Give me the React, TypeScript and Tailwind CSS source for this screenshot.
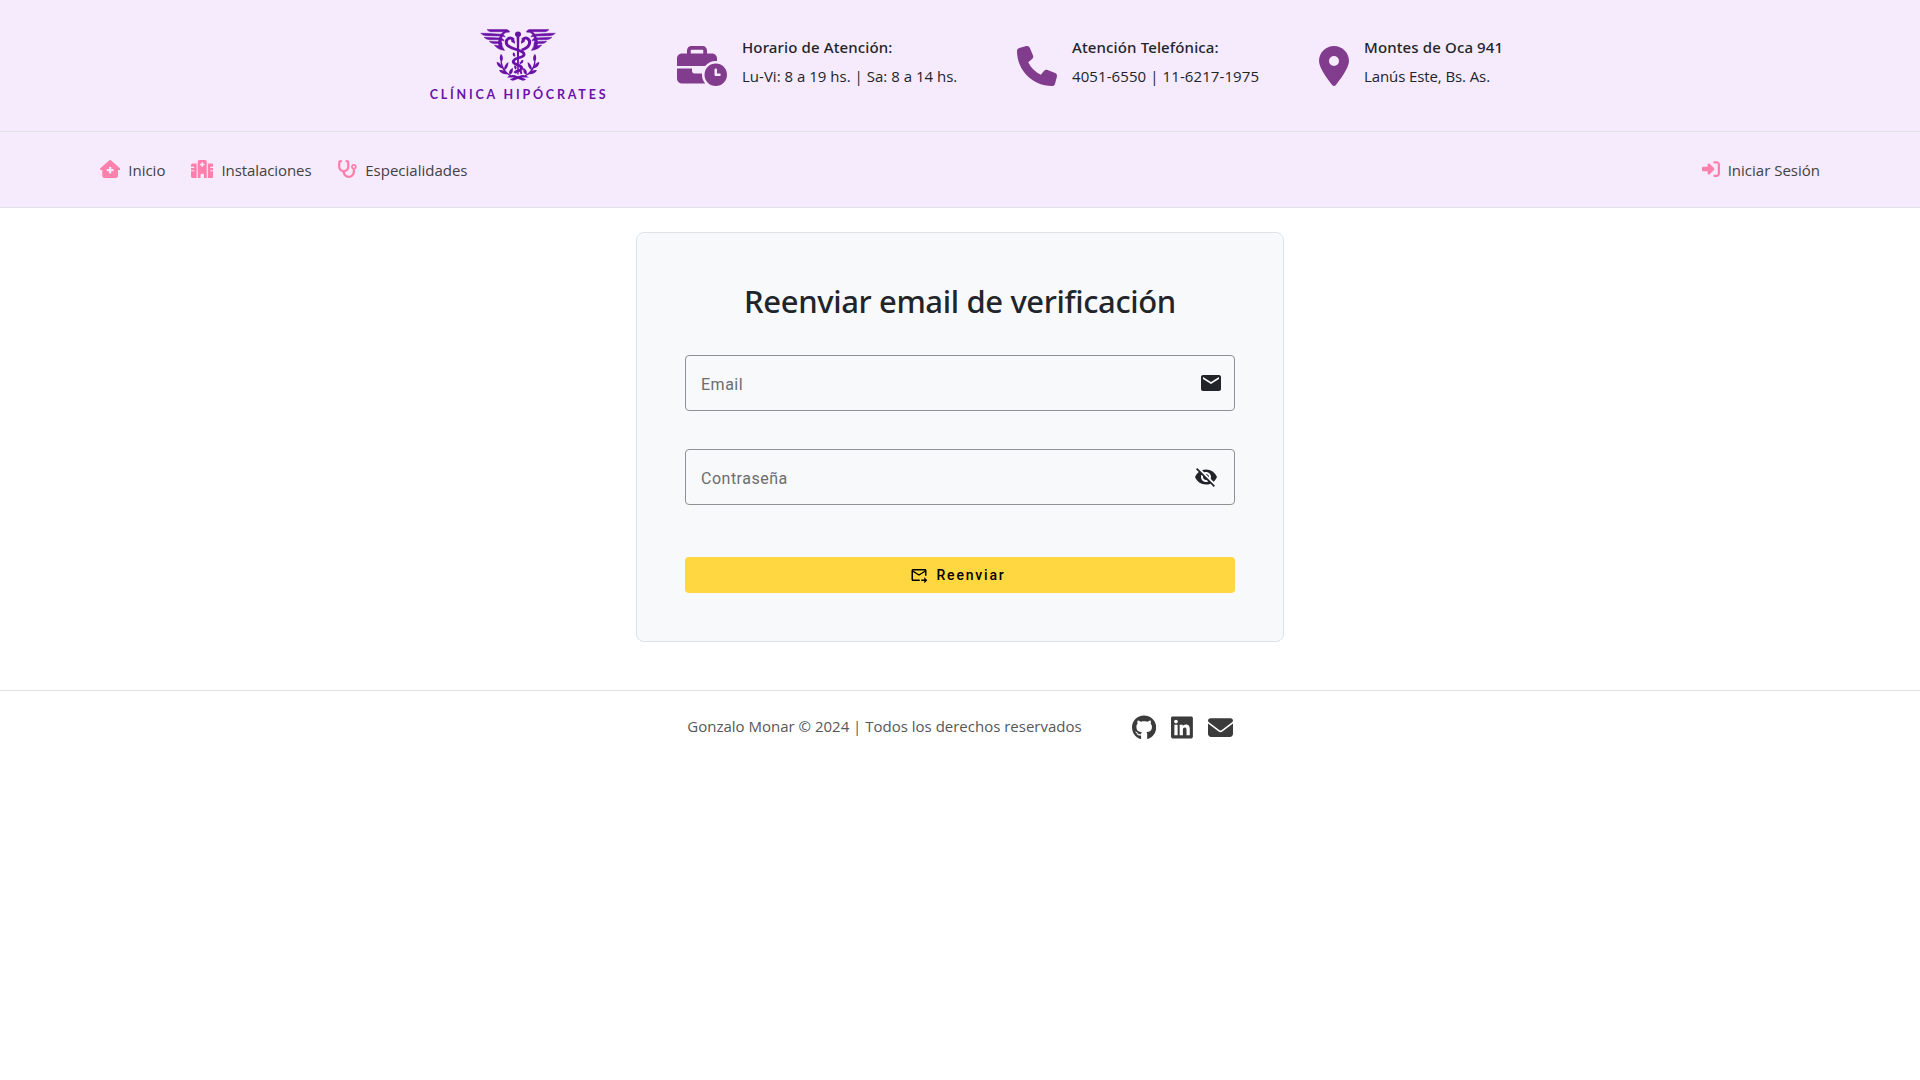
import type { ReactNode } from "react";
import {
  FaBusinessTime,
  FaPhone,
  FaLocationDot,
  FaHouseMedical,
  FaHospital,
  FaStethoscope,
  FaRightToBracket,
  FaGithub,
  FaLinkedin,
  FaEnvelope,
} from "react-icons/fa6";
import { MdEmail, MdVisibilityOff, MdOutlineForwardToInbox } from "react-icons/md";

function Wing() {
  return (
    <g stroke="currentColor" strokeWidth="1.5">
      <path d="M24 5 L84 5 Q90 7 92 13 Q86 15 78 12 L34 12 Q27 10 24 5 Z" />
      <path d="M5 17 L20 17 L68 20 Q76 22 79 29 L66 26 L22 25 Q11 24 5 17 Z" />
      <path d="M15 30 L66 32 Q74 34 75 42 L62 38 L32 38 Q21 37 15 30 Z" />
      <path d="M31 43 L62 44 Q70 46 69 54 L56 50 L43 50 Q35 49 31 43 Z" />
      <path d="M46 55 L60 57 Q68 60 76 72 Q56 70 46 55 Z" />
      <path d="M90 10 Q70 17 67 36 Q66 56 76 72 Q58 66 58 46 Q60 20 78 9 Z" />
    </g>
  );
}

function Laurel() {
  return (
    <g>
      <path d="M66 83 Q77 97 67 111 Q58 98 66 83 Z" />
      <path d="M53 109 Q68 114 70 131 Q53 126 53 109 Z" />
      <path d="M88 110 Q89 127 76 137 Q73 120 88 110 Z" />
      <path d="M60 136 Q77 134 86 149 Q68 151 60 136 Z" />
      <path d="M101 128 Q104 145 92 151 Q86 138 101 128 Z" />
      <path d="M68 108 Q72 138 98 154 L94 156 Q66 140 64 108 Z" />
      <path d="M84 160 Q98 146 114 155 L142 165 L132 170 L112 162 L96 169 Q104 160 106 160 Z" />
    </g>
  );
}

function Logo() {
  return (
    <div className="flex w-[175px] flex-col items-center text-[#6a12a8]">
      <svg viewBox="0 0 234 174" className="block h-[58px] w-[78px]" fill="currentColor">
        <g transform="translate(0 6) scale(1 0.93)">
          <Wing />
          <Laurel />
          <g transform="translate(234 0) scale(-1 1)">
            <Wing />
            <Laurel />
          </g>
          <circle cx="117" cy="20" r="9" />
          <path d="M113 26 h8 l-2 124 h-4 Z" />
          <path
            d="M104 38 C94 24 78 38 83 52 C90 70 138 70 135 86 C133 98 102 94 103 109 C104 120 129 118 128 130 C127 138 113 136 107 145"
            fill="none"
            stroke="currentColor"
            strokeWidth="9"
          />
          <path
            d="M130 38 C140 24 156 38 151 52 C148 62 139 67 128 71"
            fill="none"
            stroke="currentColor"
            strokeWidth="9"
          />
          <path
            d="M105 80 Q102 86 108 90 M130 104 Q131 112 122 114 M109 122 Q107 128 112 131 M122 138 Q128 142 126 148"
            fill="none"
            stroke="currentColor"
            strokeWidth="6"
          />
          <path d="M96 32 Q109 34 108 51 L97 44 Z M138 32 Q125 34 126 51 L137 44 Z" />
        </g>
      </svg>
      <div className="mt-[2.5px] whitespace-nowrap pl-[3px] font-['Lato',sans-serif] text-[12.5px] leading-[16px] font-bold tracking-[2.8px]">
        CLÍNICA HIPÓCRATES
      </div>
    </div>
  );
}

function InfoItem({ icon, title, detail, className }: { icon: ReactNode; title: string; detail: ReactNode; className: string }) {
  return (
    <div className={`flex items-center gap-[15px] pt-[41px] ${className}`}>
      <span className="text-[40px] text-[#823c8d]">{icon}</span>
      <div className="-mt-2 whitespace-nowrap text-[15px] text-[#212529]">
        <p className="font-['Noto_Sans',sans-serif] leading-[29px] font-medium tracking-[0.13px]">{title}</p>
        <p className="leading-[29px]">{detail}</p>
      </div>
    </div>
  );
}

function NavItem({ icon, label }: { icon: ReactNode; label: ReactNode }) {
  return (
    <a href="#" className="flex items-center gap-2 whitespace-nowrap">
      <span className="-mt-px text-[18px] text-[#ff80ab]">{icon}</span>
      <span className="text-[15px] leading-6 text-[#424242]">{label}</span>
    </a>
  );
}

export default function App() {
  return (
    <div className="min-h-screen bg-white font-['Open_Sans',sans-serif]">
      <header className="bg-[#f6eafd]">
        <div className="flex h-[132px] items-start border-b border-[#dee2e6] pl-[430px]">
          <div className="pt-[26px]">
            <Logo />
          </div>
          <InfoItem
            className="ml-[72px] w-[282px]"
            icon={<FaBusinessTime className="h-10 w-[50px]" />}
            title="Horario de Atención:"
            detail={<span className="tracking-[0.01px]">Lu-Vi: 8 a 19 hs. | Sa: 8 a 14 hs.</span>}
          />
          <InfoItem
            className="ml-[58px] w-[243px]"
            icon={<FaPhone />}
            title="Atención Telefónica:"
            detail={<span className="tracking-[0.09px]">4051-6550 | 11-6217-1975</span>}
          />
          <InfoItem
            className="ml-[59px]"
            icon={<FaLocationDot className="h-10 w-[30px]" />}
            title="Montes de Oca 941"
            detail={<span className="tracking-[-0.1px]">Lanús Este, Bs. As.</span>}
          />
        </div>
        <nav className="flex h-[76px] items-center justify-between border-b border-[#dee2e6] px-[100px]">
          <div className="flex items-center gap-[25.5px]">
            <NavItem icon={<FaHouseMedical className="h-[18px] w-[20.25px]" />} label="Inicio" />
            <NavItem
              icon={<FaHospital className="h-[18px] w-[22.5px]" />}
              label={<span className="tracking-[-0.08px]">Instalaciones</span>}
            />
            <NavItem icon={<FaStethoscope className="h-[18px] w-[20.25px]" />} label="Especialidades" />
          </div>
          <NavItem icon={<FaRightToBracket />} label="Iniciar Sesión" />
        </nav>
      </header>

      <main className="flex justify-center pt-6">
        <section className="h-[410px] w-[648px] rounded-lg border border-[#dee2e6] bg-[#f8f9fb] px-12 pt-[47px]">
          <h2 className="text-center font-['Noto_Sans',sans-serif] text-[31px] leading-[42px] font-medium tracking-[-0.37px] text-[#212529]">
            Reenviar email de verificación
          </h2>
          <form className="mt-[33px] font-['Roboto',sans-serif]">
            <div className="flex h-14 items-center justify-between rounded-[4px] border border-[#8f9194] pr-[11px] pl-[15px]">
              <label className="mt-1 text-[16px] tracking-[0.5px] text-[#6b6c6f]">Email</label>
              <MdEmail className="size-6 text-[#212529]" />
            </div>
            <div className="mt-[38px] flex h-14 items-center justify-between rounded-[4px] border border-[#8f9194] pr-4 pl-[15px]">
              <label className="mt-1 text-[16px] tracking-[0.5px] text-[#6b6c6f]">Contraseña</label>
              <MdVisibilityOff className="size-6 text-[#212529]" />
            </div>
            <button
              type="button"
              className="mt-[52px] flex h-9 w-full items-center justify-center gap-2 rounded-[4px] bg-[#ffd740] pr-1 text-[14px] font-medium tracking-[1.8px] text-black"
            >
              <MdOutlineForwardToInbox className="size-[18px]" />
              Reenviar
            </button>
          </form>
        </section>
      </main>

      <footer className="mt-12 flex justify-center border-t border-[#dee2e6] pt-6">
        <p className="-mt-px whitespace-nowrap text-[15px] leading-6 text-[#55585b]">
          Gonzalo Monar © 2024 | Todos los derechos reservados
        </p>
        <div className="ml-[50px] flex items-center gap-[15px] text-[#3b3b3b]">
          <FaGithub className="h-[25px] w-[24.2px]" />
          <FaLinkedin className="h-[25px] w-[21.9px]" />
          <FaEnvelope className="size-[25px]" />
        </div>
      </footer>
    </div>
  );
}
